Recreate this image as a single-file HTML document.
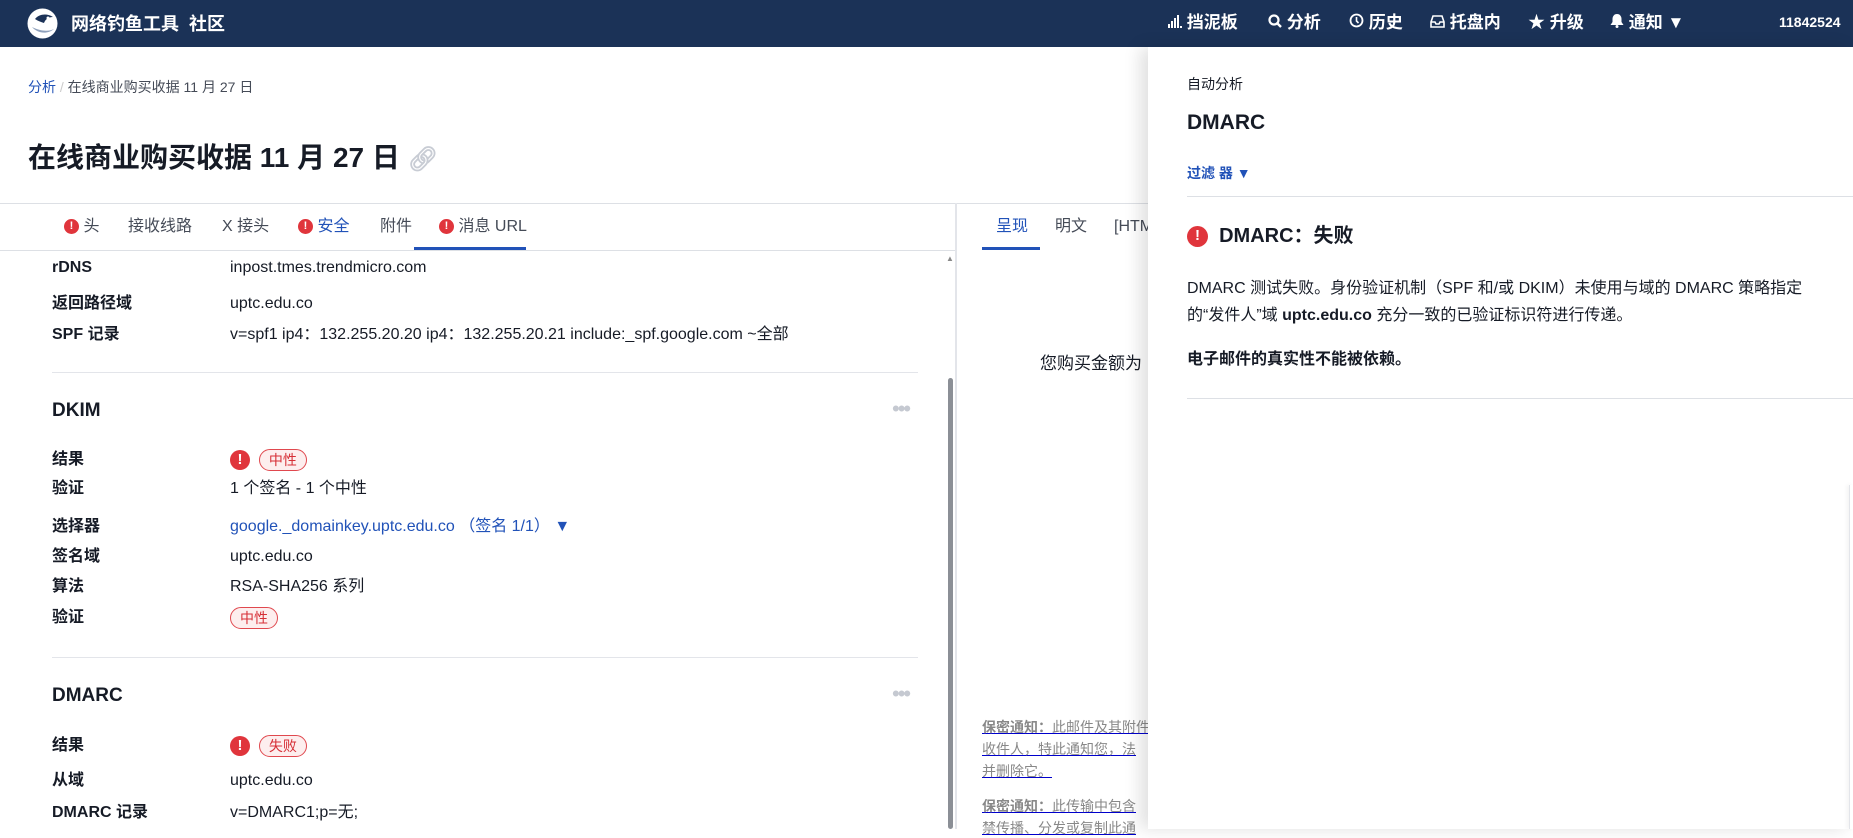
<!DOCTYPE html>
<html><head><meta charset="utf-8"><style>
*{margin:0;padding:0;box-sizing:border-box}
body{width:1853px;height:829px;overflow:hidden;background:#fff;font-family:"Liberation Sans","Noto Sans CJK SC",sans-serif;color:#161b26;position:relative}
.a{position:absolute;white-space:nowrap}
.hdr{position:absolute;left:0;top:0;width:1853px;height:47px;background:#1b3257;color:#fff}
.nav{font-size:17px;font-weight:bold;top:12px;line-height:22px}
.lbl{left:52px;font-size:16px;font-weight:bold;line-height:22px}
.val{left:230px;font-size:16px;line-height:22px}
.sep{position:absolute;left:52px;width:866px;height:1px;background:#e3e5ea}
.badge{display:inline-block;border:1px solid #e0484e;background:#fdeeee;color:#d62f36;border-radius:12px;font-size:14px;padding:0 9px;line-height:20px;vertical-align:middle}
.ex{display:inline-block;width:20px;height:20px;border-radius:50%;background:#e0353c;color:#fff;font-weight:bold;font-size:15px;text-align:center;line-height:20px;vertical-align:middle}
.dots{font-size:22px;color:#c5c9d1;letter-spacing:-2px;left:892px}
.tab{font-size:16px;color:#454b57;top:216px;line-height:22px}
.ft{font-size:14px;color:#888;text-decoration:underline;text-decoration-color:#00c;left:982px;line-height:20px}
</style></head><body>
<div class="hdr">
 <svg class="a" style="left:26px;top:7px" width="33" height="33" viewBox="0 0 33 33"><circle cx="16.5" cy="16.5" r="15" fill="#fff"/><path d="M6 20c5 6 15 8 22 2-6 3-14 2-22-2z" fill="#8ea0bb"/><path d="M9 12c4-5 12-6 18-2-5 0-8 3-9 6-3-1-6-2-9-4z" fill="#1b3257"/><circle cx="22" cy="11" r="1.5" fill="#fff"/></svg>
 <div class="a" style="left:71px;top:12px;font-size:18px;font-weight:bold;line-height:24px">网络钓鱼工具&nbsp; 社区</div>
 <div class="a nav" style="left:1168px"><svg width="14" height="14" viewBox="0 0 14 14"><rect x="0" y="10" width="2" height="4" fill="#fff"/><rect x="3" y="7" width="2" height="7" fill="#fff"/><rect x="6" y="4" width="2" height="10" fill="#fff"/><rect x="9" y="1" width="2" height="13" fill="#fff"/><rect x="12" y="12" width="2" height="2" fill="#fff"/></svg> 挡泥板</div>
 <div class="a nav" style="left:1268px"><svg width="14" height="14" viewBox="0 0 14 14"><circle cx="6" cy="6" r="4.5" fill="none" stroke="#fff" stroke-width="2.2"/><path d="M9 9l4 4" stroke="#fff" stroke-width="2.4"/></svg> 分析</div>
 <div class="a nav" style="left:1349px"><svg width="15" height="15" viewBox="0 0 15 15"><circle cx="7.5" cy="7.5" r="6" fill="none" stroke="#fff" stroke-width="1.8"/><path d="M7.5 4v4l2 2" fill="none" stroke="#fff" stroke-width="1.6"/></svg> 历史</div>
 <div class="a nav" style="left:1430px"><svg width="15" height="14" viewBox="0 0 15 14"><path d="M3 2h9l2 6v5H1V8z" fill="none" stroke="#fff" stroke-width="1.6"/><path d="M1 8h4l1 2h3l1-2h4" fill="none" stroke="#fff" stroke-width="1.6"/></svg> 托盘内</div>
 <div class="a nav" style="left:1528px">★ 升级</div>
 <div class="a nav" style="left:1610px"><svg width="14" height="15" viewBox="0 0 14 15"><path d="M7 1c3 0 4.5 2.5 4.5 5v3l2 3H.5l2-3V6C2.5 3.5 4 1 7 1z" fill="#fff"/><circle cx="7" cy="13.5" r="1.5" fill="#fff"/></svg> 通知 ▼</div>
 <div class="a" style="left:1779px;top:14px;font-size:14px;font-weight:bold">11842524</div>
</div>

<div class="a" style="left:28px;top:77px;font-size:14px;line-height:20px"><span style="color:#2152b8">分析</span> <span style="color:#ccc">/</span> <span style="color:#454b57">在线商业购买收据 11 月 27 日</span></div>
<div class="a" style="left:28px;top:140px;font-size:28px;font-weight:bold;line-height:36px">在线商业购买收据 11 月 27 日 <span style="color:#c8ccd4;font-size:24px">🔗︎</span></div>
<div class="a" style="left:0;top:203px;width:1148px;height:1px;background:#dde0e5"></div>
<div class="a tab" style="left:64px"><span class="ex" style="width:15px;height:15px;line-height:15px;font-size:11px">!</span> 头</div>
<div class="a tab" style="left:128px">接收线路</div>
<div class="a tab" style="left:222px">X 接头</div>
<div class="a tab" style="left:298px;color:#2152b8"><span class="ex" style="width:15px;height:15px;line-height:15px;font-size:11px">!</span> 安全</div>
<div class="a tab" style="left:380px">附件</div>
<div class="a tab" style="left:439px"><span class="ex" style="width:15px;height:15px;line-height:15px;font-size:11px">!</span> 消息 URL</div>
<div class="a" style="left:414px;top:247px;width:112px;height:3px;background:#2152b8"></div>
<div class="a" style="left:0;top:250px;width:955px;height:1px;background:#dde0e5"></div>
<div class="a" style="left:955px;top:203px;width:2px;height:626px;background:#e3e5ea"></div>
<div class="a" style="left:948px;top:378px;width:5px;height:451px;background:#8b8f96;border-radius:3px"></div>
<div class="a" style="left:946px;top:254px;font-size:8px;color:#888">▲</div>

<div class="a lbl" style="top:257px">rDNS</div><div class="a val" style="top:257px">inpost.tmes.trendmicro.com</div>
<div class="a lbl" style="top:293px">返回路径域</div><div class="a val" style="top:293px">uptc.edu.co</div>
<div class="a lbl" style="top:324px">SPF 记录</div><div class="a val" style="top:324px">v=spf1 ip4：132.255.20.20 ip4：132.255.20.21 include:_spf.google.com ~全部</div>
<div class="sep" style="top:372px"></div>
<div class="a" style="left:52px;top:399px;font-size:19px;font-weight:bold;line-height:24px">DKIM</div><div class="a dots" style="top:396px">•••</div>
<div class="a lbl" style="top:449px">结果</div><div class="a val" style="top:449px"><span class="ex">!</span>&nbsp; <span class="badge">中性</span></div>
<div class="a lbl" style="top:478px">验证</div><div class="a val" style="top:478px">1 个签名 - 1 个中性</div>
<div class="a lbl" style="top:516px">选择器</div><div class="a val" style="top:516px;color:#2152b8">google._domainkey.uptc.edu.co （签名 1/1） ▼</div>
<div class="a lbl" style="top:546px">签名域</div><div class="a val" style="top:546px">uptc.edu.co</div>
<div class="a lbl" style="top:576px">算法</div><div class="a val" style="top:576px">RSA-SHA256 系列</div>
<div class="a lbl" style="top:607px">验证</div><div class="a val" style="top:607px"><span class="badge">中性</span></div>
<div class="sep" style="top:657px"></div>
<div class="a" style="left:52px;top:684px;font-size:19px;font-weight:bold;line-height:24px">DMARC</div><div class="a dots" style="top:681px">•••</div>
<div class="a lbl" style="top:735px">结果</div><div class="a val" style="top:735px"><span class="ex">!</span>&nbsp; <span class="badge">失败</span></div>
<div class="a lbl" style="top:770px">从域</div><div class="a val" style="top:770px">uptc.edu.co</div>
<div class="a lbl" style="top:802px">DMARC 记录</div><div class="a val" style="top:802px">v=DMARC1;p=无;</div>

<div class="a tab" style="left:996px;color:#2152b8">呈现</div>
<div class="a tab" style="left:1055px">明文</div>
<div class="a tab" style="left:1114px">[HTML]</div>
<div class="a" style="left:982px;top:247px;width:58px;height:3px;background:#2152b8"></div>
<div class="a" style="left:1040px;top:352px;font-size:17px;line-height:24px">您购买金额为</div>
<div class="a ft" style="top:717px"><b>保密通知：</b>此邮件及其附件</div>
<div class="a ft" style="top:739px">收件人，特此通知您，法</div>
<div class="a ft" style="top:761px">并删除它。</div>
<div class="a ft" style="top:796px"><b>保密通知：</b>此传输中包含</div>
<div class="a ft" style="top:818px">禁传播、分发或复制此通</div>

<div class="a" style="left:1148px;top:47px;width:705px;height:782px;background:#fff;box-shadow:-8px 0 16px rgba(0,0,0,0.12)"></div>
<div class="a" style="left:1187px;top:74px;font-size:14px;line-height:20px">自动分析</div>
<div class="a" style="left:1187px;top:110px;font-size:21px;font-weight:bold;line-height:26px">DMARC</div>
<div class="a" style="left:1187px;top:163px;font-size:14px;font-weight:bold;color:#2152b8;line-height:20px">过滤 器 ▼</div>
<div class="a" style="left:1187px;top:196px;width:666px;height:1px;background:#dde0e5"></div>
<div class="a" style="left:1187px;top:223px;font-size:20px;font-weight:bold;line-height:26px"><span class="ex" style="width:21px;height:21px">!</span>&nbsp; DMARC：失败</div>
<div class="a" style="left:1187px;top:275px;font-size:16px;line-height:27px;white-space:normal;width:650px">DMARC 测试失败。身份验证机制（SPF 和/或 DKIM）未使用与域的 DMARC 策略指定的“发件人”域 <b>uptc.edu.co</b> 充分一致的已验证标识符进行传递。</div>
<div class="a" style="left:1187px;top:349px;font-size:16px;font-weight:bold;line-height:22px">电子邮件的真实性不能被依赖。</div>
<div class="a" style="left:1187px;top:398px;width:666px;height:1px;background:#dde0e5"></div>
<div class="a" style="left:1849px;top:485px;width:4px;height:344px;border-left:1px solid #e3e5ea;box-shadow:-2px 0 4px rgba(0,0,0,0.06)"></div>
</body></html>
